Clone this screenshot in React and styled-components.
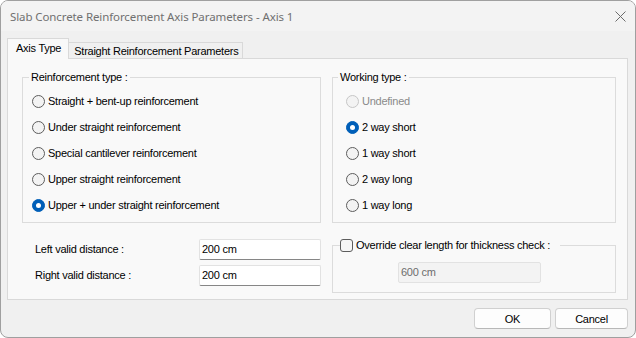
import React from "react";
import styled, { createGlobalStyle } from "styled-components";

const GlobalStyle = createGlobalStyle`
  html, body {
    margin: 0;
    padding: 0;
    background: #ffffff;
  }
  body {
    font-family: "Liberation Sans", Arial, sans-serif;
    font-size: 11px;
    letter-spacing: -0.25px;
    color: #000;
  }
`;

const Window = styled.div`
  box-sizing: border-box;
  width: 636px;
  height: 338px;
  border: 1px solid #9f9f9f;
  border-radius: 8px;
  overflow: hidden;
  background: #f0f0f0;
  display: flex;
  flex-direction: column;
`;

const TitleBar = styled.div`
  height: 30px;
  flex: none;
  background: #f3f3f3;
  display: flex;
  align-items: center;
  justify-content: space-between;
  padding: 0 9px 0 9px;
`;

const Title = styled.span`
  font-family: "Noto Sans", "Open Sans", sans-serif;
  font-size: 11.5px;
  letter-spacing: -0.1px;
  color: #707070;
`;

const Body = styled.div`
  flex: 1;
  display: flex;
  flex-direction: column;
  padding: 7px 7px 0 6px;
`;

const TabStrip = styled.div`
  display: flex;
  align-items: flex-end;
  height: 21px;
  margin-bottom: -1px;
`;

const Tab = styled.div`
  box-sizing: border-box;
  position: relative;
  z-index: ${({ $active }) => ($active ? 2 : 1)};
  height: ${({ $active }) => ($active ? "21px" : "17px")};
  padding: ${({ $active }) => ($active ? "3px 7px 0 8px" : "2px 4px 0 5px")};
  background: ${({ $active }) => ($active ? "#f9f9f9" : "#f0f0f0")};
  border: 1px solid #d9d9d9;
  border-bottom: ${({ $active }) => ($active ? "none" : "1px solid #d9d9d9")};
  border-left: ${({ $first }) => ($first ? "1px solid #d9d9d9" : "none")};
  white-space: nowrap;
`;

const Panel = styled.div`
  box-sizing: border-box;
  height: 242px;
  border: 1px solid #d9d9d9;
  background: #f9f9f9;
  padding: 12px 0 0 14px;
  display: grid;
  grid-template-columns: 299px 284px;
  grid-template-rows: auto auto;
  column-gap: 11px;
  row-gap: 9px;
  align-items: start;
`;

const Group = styled.fieldset`
  box-sizing: border-box;
  margin: 0;
  padding: 0 0 ${({ $bottom }) => $bottom || 0}px 0;
  border: 1px solid #dcdcdc;
  min-width: 0;
`;

const Legend = styled.legend`
  margin-left: ${({ $indent }) => $indent}px;
  padding: 0 ${({ $padRight }) => $padRight || 2}px 0 ${({ $padLeft }) => $padLeft ?? 2}px;
  line-height: 13px;
  height: 13px;
  display: flex;
  align-items: center;
  gap: 3px;
`;

const RadioList = styled.div`
  display: flex;
  flex-direction: column;
  padding: 4px 0 0 ${({ $indent }) => $indent}px;
`;

const RadioRow = styled.div`
  height: 26px;
  display: flex;
  align-items: center;
  gap: 3px;
  color: ${({ $disabled }) => ($disabled ? "#8a8a8a" : "#000")};
`;

const RadioDot = styled.span`
  box-sizing: border-box;
  width: 13px;
  height: 13px;
  border-radius: 50%;
  flex: none;
  background: ${({ $checked }) => ($checked ? "#005fb8" : "#f3f3f3")};
  border: 1px solid
    ${({ $checked, $disabled }) =>
      $checked ? "#005fb8" : $disabled ? "#c6c6c6" : "#5d5d5d"};
  display: flex;
  align-items: center;
  justify-content: center;

  &::after {
    content: "";
    display: ${({ $checked }) => ($checked ? "block" : "none")};
    width: 5px;
    height: 5px;
    border-radius: 50%;
    background: #ffffff;
  }
`;

const CheckBox = styled.span`
  box-sizing: border-box;
  width: 13px;
  height: 13px;
  flex: none;
  border: 1px solid #5d5d5d;
  border-radius: 3px;
  background: #f6f6f6;
`;

const Fields = styled.div`
  display: flex;
  flex-direction: column;
  gap: 5px;
  padding-left: 13px;
`;

const FieldRow = styled.div`
  display: grid;
  grid-template-columns: 164px 122px;
  align-items: center;
`;

const TextBox = styled.div`
  box-sizing: border-box;
  height: 21px;
  width: ${({ $width }) => $width}px;
  margin: ${({ $top }) => $top || 0}px 0 0 ${({ $left }) => $left || 0}px;
  display: flex;
  align-items: center;
  padding-left: 2px;
  background: ${({ $disabled }) => ($disabled ? "#f3f3f3" : "#ffffff")};
  border: 1px solid #e2e2e2;
  border-bottom-color: ${({ $disabled }) => ($disabled ? "#e2e2e2" : "#868686")};
  border-radius: 2px;
  color: ${({ $disabled }) => ($disabled ? "#6d6d6d" : "#000")};
`;

const Footer = styled.div`
  display: flex;
  justify-content: flex-end;
  gap: 4px;
  padding-top: 8px;
`;

const Button = styled.div`
  box-sizing: border-box;
  width: ${({ $width }) => $width}px;
  height: 21px;
  display: flex;
  align-items: center;
  justify-content: center;
  background: #fdfdfd;
  border: 1px solid #d0d0d0;
  border-bottom-color: #b8b8b8;
  border-radius: 4px;
`;

function CloseIcon() {
  return (
    <svg width="11" height="11" viewBox="0 0 11 11">
      <path d="M0.5 0.5 L10.5 10.5 M10.5 0.5 L0.5 10.5" stroke="#6b6b6b" strokeWidth="1" />
    </svg>
  );
}

function Radio({ label, checked, disabled }) {
  return (
    <RadioRow $disabled={disabled}>
      <RadioDot $checked={checked} $disabled={disabled} />
      {label}
    </RadioRow>
  );
}

const reinforcementTypes = [
  "Straight + bent-up reinforcement",
  "Under straight reinforcement",
  "Special cantilever reinforcement",
  "Upper straight reinforcement",
  "Upper + under straight reinforcement",
];

const workingTypes = ["Undefined", "2 way short", "1 way short", "2 way long", "1 way long"];

export default function App() {
  return (
    <>
      <GlobalStyle />
      <Window>
        <TitleBar>
          <Title>Slab Concrete Reinforcement Axis Parameters - Axis 1</Title>
          <CloseIcon />
        </TitleBar>
        <Body>
          <TabStrip>
            <Tab $active $first>Axis Type</Tab>
            <Tab>Straight Reinforcement Parameters</Tab>
          </TabStrip>
          <Panel>
            <Group $bottom={4}>
              <Legend $indent={6}>Reinforcement type :</Legend>
              <RadioList $indent={9}>
                {reinforcementTypes.map((t, i) => (
                  <Radio key={t} label={t} checked={i === 4} />
                ))}
              </RadioList>
            </Group>
            <Group $bottom={4}>
              <Legend $indent={5}>Working type :</Legend>
              <RadioList $indent={13}>
                {workingTypes.map((t, i) => (
                  <Radio key={t} label={t} checked={i === 1} disabled={i === 0} />
                ))}
              </RadioList>
            </Group>
            <Fields>
              <FieldRow>
                <span>Left valid distance :</span>
                <TextBox $width={122}>200 cm</TextBox>
              </FieldRow>
              <FieldRow>
                <span>Right valid distance :</span>
                <TextBox $width={122}>200 cm</TextBox>
              </FieldRow>
            </Fields>
            <Group $bottom={9}>
              <Legend $indent={7} $padLeft={0} $padRight={10}>
                <CheckBox />
                Override clear length for thickness check :
              </Legend>
              <TextBox $width={143} $left={65} $top={10} $disabled>
                600 cm
              </TextBox>
            </Group>
          </Panel>
          <Footer>
            <Button $width={77}>OK</Button>
            <Button $width={73}>Cancel</Button>
          </Footer>
        </Body>
      </Window>
    </>
  );
}
